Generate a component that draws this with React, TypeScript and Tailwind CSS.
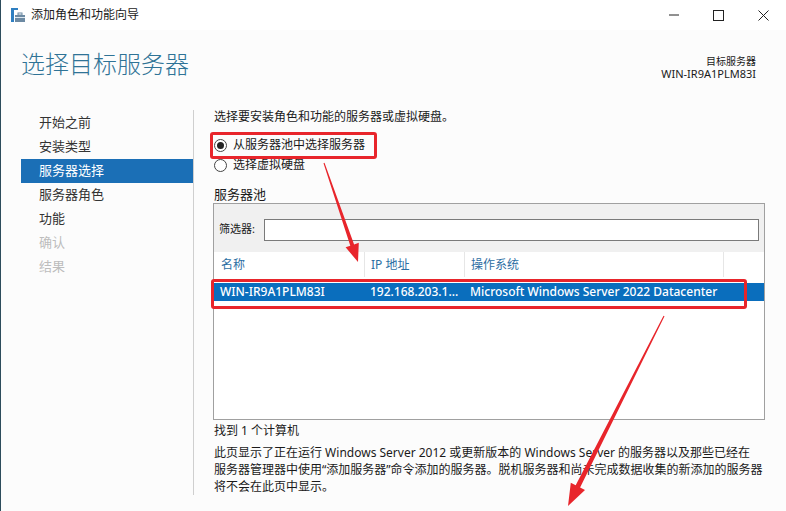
const FONT = { fontFamily: '"Noto Sans", "Noto Sans CJK SC", sans-serif' };

function AppIcon() {
  return (
    <svg width="16" height="16" viewBox="0 0 16 16">
      <rect x="1" y="1" width="3" height="14" fill="#2f7fc1" />
      <rect x="4" y="1" width="4" height="2" fill="#2f7fc1" />
      <rect x="5" y="8" width="10" height="7" fill="#6d8aa3" />
      <rect x="8" y="6" width="4" height="2" fill="none" stroke="#6d8aa3" strokeWidth="1" />
      <rect x="5" y="10" width="10" height="1" fill="#dbe6ef" />
    </svg>
  );
}

function WindowControls() {
  return (
    <div className="flex items-center h-full">
      <div className="w-[44px] h-full flex items-center justify-center">
        <svg width="10" height="10" viewBox="0 0 10 10"><line x1="0" y1="5" x2="10" y2="5" stroke="#222" strokeWidth="1" /></svg>
      </div>
      <div className="w-[44px] h-full flex items-center justify-center">
        <svg width="11" height="11" viewBox="0 0 11 11"><rect x="0.5" y="0.5" width="10" height="10" fill="none" stroke="#222" strokeWidth="1" /></svg>
      </div>
      <div className="w-[46px] h-full flex items-center justify-center">
        <svg width="11" height="11" viewBox="0 0 11 11"><path d="M0.5 0.5 L10.5 10.5 M10.5 0.5 L0.5 10.5" stroke="#222" strokeWidth="1" /></svg>
      </div>
    </div>
  );
}

function Radio({ checked, label }: { checked?: boolean; label: string }) {
  return (
    <div className="flex items-center h-[20px]">
      <span className="w-[13px] h-[13px] rounded-full border border-[#444] bg-white flex items-center justify-center">
        {checked && <span className="w-[7px] h-[7px] rounded-full bg-[#222]" />}
      </span>
      <span className="ml-[6px] text-[12px] text-[#1a1a1a] leading-none">{label}</span>
    </div>
  );
}

const navItems = [
  { label: '开始之前', state: 'normal' },
  { label: '安装类型', state: 'normal' },
  { label: '服务器选择', state: 'active' },
  { label: '服务器角色', state: 'normal' },
  { label: '功能', state: 'normal' },
  { label: '确认', state: 'disabled' },
  { label: '结果', state: 'disabled' },
];

export default function App() {
  return (
    <div className="relative w-[786px] h-[511px] overflow-hidden bg-[#fcfcfc] border-l border-[#2d4c5c] flex flex-col" style={FONT}>
      {/* Title bar */}
      <div className="h-[30px] bg-white flex items-center justify-between shrink-0">
        <div className="flex items-center pl-[9px]">
          <AppIcon />
          <span className="ml-[5px] text-[12px] text-[#1a1a1a]">添加角色和功能向导</span>
        </div>
        <WindowControls />
      </div>

      {/* Header */}
      <div className="h-[80px] shrink-0 flex justify-between">
        <div className="pl-[20px] pt-[22px] text-[24px] text-[#2f7396] leading-none font-light">选择目标服务器</div>
        <div className="pr-[30px] pt-[25px] flex flex-col items-end">
          <span className="text-[10px] text-[#1a1a1a] leading-[12px]">目标服务器</span>
          <span className="text-[11px] text-[#1a1a1a] leading-[14px]">WIN-IR9A1PLM83I</span>
        </div>
      </div>

      {/* Body */}
      <div className="flex flex-1 min-h-0">
        {/* Nav */}
        <div className="w-[192px] pl-[20px] pt-[1px] shrink-0">
          {navItems.map((n) => (
            <div
              key={n.label}
              className={
                n.state === 'active'
                  ? 'h-6 pl-[18px] flex items-center text-[13px] bg-[#1b6fb6] text-white'
                  : n.state === 'disabled'
                  ? 'h-6 pl-[18px] flex items-center text-[13px] text-[#bdbdbd]'
                  : 'h-6 pl-[18px] flex items-center text-[13px] text-[#333]'
              }
            >
              {n.label}
            </div>
          ))}
        </div>
        <div className="w-px bg-[#cfcfcf] mb-[16px] shrink-0" />

        {/* Content */}
        <div className="flex-1 pl-[20px] pr-[21px]">
          <div className="text-[12px] text-[#1a1a1a] h-[14px] leading-[14px]">选择要安装角色和功能的服务器或虚拟硬盘。</div>

          <div className="mt-[11px] flex flex-col">
            <Radio checked label="从服务器池中选择服务器" />
            <Radio label="选择虚拟硬盘" />
          </div>

          <div className="mt-[11px] text-[13px] text-[#1a1a1a] leading-[16px]">服务器池</div>

          <div className="mt-[1px] -ml-[1px] w-[552px] h-[217px] border border-[#a0a0a0] bg-white flex flex-col">
            <div className="h-[48px] bg-[#f0f0f0] flex items-center pl-[5px] pr-[5px] pt-[3px]">
              <span className="text-[11px] text-[#1a1a1a] w-[45px]">筛选器:</span>
              <div className="flex-1 h-[22px] border border-[#7a7a7a] bg-white" />
            </div>
            <div className="h-[25px] flex text-[12px] text-[#2c6ea3]">
              <div className="w-[151px] pl-[7px] flex items-center border-r border-[#e6e6e6]">名称</div>
              <div className="w-[100px] pl-[6px] flex items-center border-r border-[#e6e6e6]">IP 地址</div>
              <div className="w-[259px] pl-[6px] flex items-center border-r border-[#e6e6e6]">操作系统</div>
              <div className="flex-1" />
            </div>
            <div className="mt-[6px] h-[18px] bg-[#0a6ebd] flex items-center text-[12px] text-white font-medium">
              <div className="w-[151px] pl-[6px]">WIN-IR9A1PLM83I</div>
              <div className="w-[100px] pl-[5px]">192.168.203.1...</div>
              <div className="pl-[5px]">Microsoft Windows Server 2022 Datacenter</div>
            </div>
          </div>

          <div className="mt-[2px] text-[12px] text-[#1a1a1a] leading-[17px]">找到 1 个计算机</div>
          <div className="mt-[5px] text-[12px] text-[#1a1a1a] leading-[17px] whitespace-nowrap">
            此页显示了正在运行 Windows Server 2012 或更新版本的 Windows Server 的服务器以及那些已经在<br />
            服务器管理器中使用“添加服务器”命令添加的服务器。脱机服务器和尚未完成数据收集的新添加的服务器<br />
            将不会在此页中显示。
          </div>
        </div>
        <div className="w-px bg-[#d0d0d0] mr-[2px] shrink-0" />
      </div>

      {/* Annotations */}
      <div className="absolute left-[209px] top-[132px] w-[167px] h-[27px] border-[3px] border-[#e8252b] rounded-[3px]" />
      <div className="absolute left-[210px] top-[279px] w-[536px] h-[30px] border-[3px] border-[#e8252b] rounded-[3px]" />
      <svg className="absolute left-0 top-0" width="786" height="511" viewBox="0 0 786 511">
        <polygon fill="#e8252b" points="322.5,163.2 349.3,245.7 344.6,247.3 357,262 357.8,242.7 353.1,244.4 323.5,162.8" />
        <polygon fill="#e8252b" points="662.5,315.7 574.7,485.3 569.8,482.8 567,506 584,490 579.1,487.5 663.5,316.3" />
      </svg>
    </div>
  );
}
